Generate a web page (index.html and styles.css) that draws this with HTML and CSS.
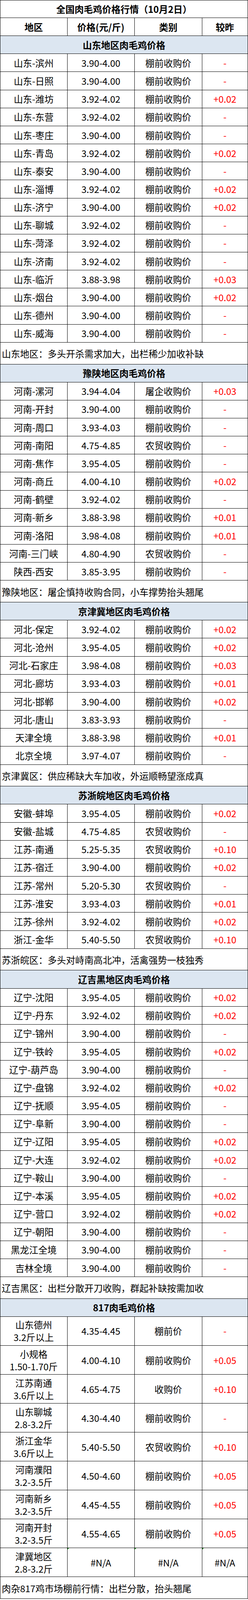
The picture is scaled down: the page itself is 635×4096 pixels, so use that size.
FILE: index.html
```html
<!DOCTYPE html>
<html lang="zh-CN">
<head>
<meta charset="utf-8">
<title>全国肉毛鸡价格行情</title>
<link rel="stylesheet" href="styles.css">
</head>
<body>
<div class="sheet">
  <div class="title">全国肉毛鸡价格行情（10月2日）</div>
  <div class="row hd"><div class="c">地区</div><div class="c">价格(元/斤)</div><div class="c">类别</div><div class="c">较昨</div></div>

  <div class="sec">山东地区肉毛鸡价格</div>
  <div class="row"><div class="c">山东-滨州</div><div class="c">3.90-4.00</div><div class="c">棚前收购价</div><div class="c up">-</div></div>
  <div class="row"><div class="c">山东-日照</div><div class="c">3.90-4.00</div><div class="c">棚前收购价</div><div class="c up">-</div></div>
  <div class="row"><div class="c">山东-潍坊</div><div class="c">3.92-4.02</div><div class="c">棚前收购价</div><div class="c up">+0.02</div></div>
  <div class="row"><div class="c">山东-东营</div><div class="c">3.92-4.02</div><div class="c">棚前收购价</div><div class="c up">-</div></div>
  <div class="row"><div class="c">山东-枣庄</div><div class="c">3.90-4.00</div><div class="c">棚前收购价</div><div class="c up">-</div></div>
  <div class="row"><div class="c">山东-青岛</div><div class="c">3.92-4.02</div><div class="c">棚前收购价</div><div class="c up">+0.02</div></div>
  <div class="row"><div class="c">山东-泰安</div><div class="c">3.90-4.00</div><div class="c">棚前收购价</div><div class="c up">-</div></div>
  <div class="row"><div class="c">山东-淄博</div><div class="c">3.92-4.02</div><div class="c">棚前收购价</div><div class="c up">+0.02</div></div>
  <div class="row"><div class="c">山东-济宁</div><div class="c">3.90-4.00</div><div class="c">棚前收购价</div><div class="c up">+0.02</div></div>
  <div class="row"><div class="c">山东-聊城</div><div class="c">3.92-4.02</div><div class="c">棚前收购价</div><div class="c up">-</div></div>
  <div class="row"><div class="c">山东-菏泽</div><div class="c">3.92-4.02</div><div class="c">棚前收购价</div><div class="c up">-</div></div>
  <div class="row"><div class="c">山东-济南</div><div class="c">3.92-4.02</div><div class="c">棚前收购价</div><div class="c up">-</div></div>
  <div class="row"><div class="c">山东-临沂</div><div class="c">3.88-3.98</div><div class="c">棚前收购价</div><div class="c up">+0.03</div></div>
  <div class="row"><div class="c">山东-烟台</div><div class="c">3.90-4.00</div><div class="c">棚前收购价</div><div class="c up">+0.02</div></div>
  <div class="row"><div class="c">山东-德州</div><div class="c">3.90-4.00</div><div class="c">棚前收购价</div><div class="c up">-</div></div>
  <div class="row"><div class="c">山东-威海</div><div class="c">3.90-4.00</div><div class="c">棚前收购价</div><div class="c up">-</div></div>
  <div class="note">山东地区：多头开杀需求加大，出栏稀少加收补缺</div>

  <div class="sec">豫陕地区肉毛鸡价格</div>
  <div class="row"><div class="c">河南-漯河</div><div class="c">3.94-4.04</div><div class="c">屠企收购价</div><div class="c up">+0.03</div></div>
  <div class="row"><div class="c">河南-开封</div><div class="c">3.90-4.00</div><div class="c">棚前收购价</div><div class="c up">-</div></div>
  <div class="row"><div class="c">河南-周口</div><div class="c">3.93-4.03</div><div class="c">棚前收购价</div><div class="c up">-</div></div>
  <div class="row"><div class="c">河南-南阳</div><div class="c">4.75-4.85</div><div class="c">农贸收购价</div><div class="c up">-</div></div>
  <div class="row"><div class="c">河南-焦作</div><div class="c">3.95-4.05</div><div class="c">棚前收购价</div><div class="c up">-</div></div>
  <div class="row"><div class="c">河南-商丘</div><div class="c">4.00-4.10</div><div class="c">棚前收购价</div><div class="c up">+0.02</div></div>
  <div class="row"><div class="c">河南-鹤壁</div><div class="c">3.92-4.02</div><div class="c">棚前收购价</div><div class="c up">-</div></div>
  <div class="row"><div class="c">河南-新乡</div><div class="c">3.88-3.98</div><div class="c">棚前收购价</div><div class="c up">+0.01</div></div>
  <div class="row"><div class="c">河南-洛阳</div><div class="c">3.98-4.08</div><div class="c">棚前收购价</div><div class="c up">+0.01</div></div>
  <div class="row"><div class="c">河南-三门峡</div><div class="c">4.80-4.90</div><div class="c">农贸收购价</div><div class="c up">-</div></div>
  <div class="row"><div class="c">陕西-西安</div><div class="c">3.85-3.95</div><div class="c">棚前收购价</div><div class="c up">-</div></div>
  <div class="note">豫陕地区：屠企慎持收购合同，小车撑势抬头翘尾</div>

  <div class="sec">京津冀地区肉毛鸡价格</div>
  <div class="row"><div class="c">河北-保定</div><div class="c">3.92-4.02</div><div class="c">棚前收购价</div><div class="c up">+0.02</div></div>
  <div class="row"><div class="c">河北-沧州</div><div class="c">3.95-4.05</div><div class="c">棚前收购价</div><div class="c up">+0.02</div></div>
  <div class="row"><div class="c">河北-石家庄</div><div class="c">3.98-4.08</div><div class="c">棚前收购价</div><div class="c up">+0.03</div></div>
  <div class="row"><div class="c">河北-廊坊</div><div class="c">3.93-4.03</div><div class="c">棚前收购价</div><div class="c up">+0.01</div></div>
  <div class="row"><div class="c">河北-邯郸</div><div class="c">3.90-4.00</div><div class="c">棚前收购价</div><div class="c up">+0.02</div></div>
  <div class="row"><div class="c">河北-唐山</div><div class="c">3.83-3.93</div><div class="c">棚前收购价</div><div class="c up">-</div></div>
  <div class="row"><div class="c">天津全境</div><div class="c">3.88-3.98</div><div class="c">棚前收购价</div><div class="c up">+0.01</div></div>
  <div class="row"><div class="c">北京全境</div><div class="c">3.97-4.07</div><div class="c">棚前收购价</div><div class="c up">-</div></div>
  <div class="note">京津冀区：供应稀缺大车加收，外运顺畅望涨成真</div>

  <div class="sec">苏浙皖地区肉毛鸡价格</div>
  <div class="row"><div class="c">安徽-蚌埠</div><div class="c">3.95-4.05</div><div class="c">棚前收购价</div><div class="c up">+0.02</div></div>
  <div class="row"><div class="c">安徽-盐城</div><div class="c">4.75-4.85</div><div class="c">农贸收购价</div><div class="c up">-</div></div>
  <div class="row"><div class="c">江苏-南通</div><div class="c">5.25-5.35</div><div class="c">农贸收购价</div><div class="c up">+0.10</div></div>
  <div class="row"><div class="c">江苏-宿迁</div><div class="c">3.90-4.00</div><div class="c">棚前收购价</div><div class="c up">+0.02</div></div>
  <div class="row"><div class="c">江苏-常州</div><div class="c">5.20-5.30</div><div class="c">农贸收购价</div><div class="c up">-</div></div>
  <div class="row"><div class="c">江苏-淮安</div><div class="c">3.93-4.03</div><div class="c">棚前收购价</div><div class="c up">+0.01</div></div>
  <div class="row"><div class="c">江苏-徐州</div><div class="c">3.92-4.02</div><div class="c">棚前收购价</div><div class="c up">+0.02</div></div>
  <div class="row"><div class="c">浙江-金华</div><div class="c">5.40-5.50</div><div class="c">农贸收购价</div><div class="c up">+0.10</div></div>
  <div class="note">苏浙皖区：多头对峙南高北冲，活禽强势一枝独秀</div>

  <div class="sec">辽吉黑地区肉毛鸡价格</div>
  <div class="row"><div class="c">辽宁-沈阳</div><div class="c">3.95-4.05</div><div class="c">棚前收购价</div><div class="c up">+0.02</div></div>
  <div class="row"><div class="c">辽宁-丹东</div><div class="c">3.92-4.02</div><div class="c">棚前收购价</div><div class="c up">+0.02</div></div>
  <div class="row"><div class="c">辽宁-锦州</div><div class="c">3.90-4.00</div><div class="c">棚前收购价</div><div class="c up">-</div></div>
  <div class="row"><div class="c">辽宁-铁岭</div><div class="c">3.95-4.05</div><div class="c">棚前收购价</div><div class="c up">+0.02</div></div>
  <div class="row"><div class="c">辽宁-葫芦岛</div><div class="c">3.90-4.00</div><div class="c">棚前收购价</div><div class="c up">-</div></div>
  <div class="row"><div class="c">辽宁-盘锦</div><div class="c">3.92-4.02</div><div class="c">棚前收购价</div><div class="c up">+0.02</div></div>
  <div class="row"><div class="c">辽宁-抚顺</div><div class="c">3.95-4.05</div><div class="c">棚前收购价</div><div class="c up">-</div></div>
  <div class="row"><div class="c">辽宁-阜新</div><div class="c">3.90-4.00</div><div class="c">棚前收购价</div><div class="c up">-</div></div>
  <div class="row"><div class="c">辽宁-辽阳</div><div class="c">3.95-4.05</div><div class="c">棚前收购价</div><div class="c up">+0.02</div></div>
  <div class="row"><div class="c">辽宁-大连</div><div class="c">3.92-4.02</div><div class="c">棚前收购价</div><div class="c up">+0.02</div></div>
  <div class="row"><div class="c">辽宁-鞍山</div><div class="c">3.90-4.00</div><div class="c">棚前收购价</div><div class="c up">-</div></div>
  <div class="row"><div class="c">辽宁-本溪</div><div class="c">3.95-4.05</div><div class="c">棚前收购价</div><div class="c up">+0.02</div></div>
  <div class="row"><div class="c">辽宁-营口</div><div class="c">3.92-4.02</div><div class="c">棚前收购价</div><div class="c up">+0.02</div></div>
  <div class="row"><div class="c">辽宁-朝阳</div><div class="c">3.90-4.00</div><div class="c">棚前收购价</div><div class="c up">-</div></div>
  <div class="row"><div class="c">黑龙江全境</div><div class="c">3.90-4.00</div><div class="c">棚前收购价</div><div class="c up">-</div></div>
  <div class="row"><div class="c">吉林全境</div><div class="c">3.90-4.00</div><div class="c">棚前收购价</div><div class="c up">-</div></div>
  <div class="note">辽吉黑区：出栏分散开刀收购，群起补缺按需加收</div>

  <div class="sec">817肉毛鸡价格</div>
  <div class="row tall"><div class="c">山东德州<br>3.2斤以上</div><div class="c">4.35-4.45</div><div class="c">棚前价</div><div class="c up">-</div></div>
  <div class="row tall"><div class="c">小规格<br>1.50-1.70斤</div><div class="c">4.00-4.10</div><div class="c">棚前收购价</div><div class="c up">+0.05</div></div>
  <div class="row tall"><div class="c">江苏南通<br>3.6斤以上</div><div class="c">4.65-4.75</div><div class="c">收购价</div><div class="c up">+0.10</div></div>
  <div class="row tall"><div class="c">山东聊城<br>2.8-3.2斤</div><div class="c">4.30-4.40</div><div class="c">棚前收购价</div><div class="c up">-</div></div>
  <div class="row tall"><div class="c">浙江金华<br>3.6斤以上</div><div class="c">5.40-5.50</div><div class="c">农贸收购价</div><div class="c up">+0.10</div></div>
  <div class="row tall"><div class="c">河南濮阳<br>3.2-3.5斤</div><div class="c">4.50-4.60</div><div class="c">棚前收购价</div><div class="c up">+0.05</div></div>
  <div class="row tall"><div class="c">河南新乡<br>3.2-3.5斤</div><div class="c">4.45-4.55</div><div class="c">棚前收购价</div><div class="c up">+0.05</div></div>
  <div class="row tall"><div class="c">河南开封<br>3.2-3.5斤</div><div class="c">4.55-4.65</div><div class="c">棚前收购价</div><div class="c up">+0.05</div></div>
  <div class="row tall"><div class="c">津冀地区<br>2.8-3.2斤</div><div class="c err">#N/A</div><div class="c err">#N/A</div><div class="c err">#N/A</div></div>
  <div class="note">肉杂817鸡市场棚前行情：出栏分散，抬头翘尾</div>
</div>
</body>
</html>
```

FILE: styles.css
```css
html, body {
  margin: 0;
  padding: 0;
  background: #ffffff;
}

.sheet {
  width: 635px;
  box-sizing: border-box;
  border: 1.5px solid #000;
  border-bottom: none;
  font-family: "Noto Sans CJK SC", "Noto Sans", sans-serif;
  font-size: 23.5px;
  color: #000;
  line-height: 32px;
}

.title {
  height: 44.8px;
  box-sizing: border-box;
  border-bottom: 1.5px solid #000;
  display: flex;
  align-items: center;
  justify-content: center;
  font-weight: 700;
}

.row {
  display: grid;
  grid-template-columns: 171.5px 172.5px 172.5px 1fr;
  height: 46.16px;
  box-sizing: border-box;
  border-bottom: 1.5px solid #000;
}

.row.hd {
  height: 46.5px;
  font-weight: 700;
}

.row.tall {
  height: 74.04px;
}

.c {
  position: relative;
  display: flex;
  align-items: center;
  justify-content: center;
  text-align: center;
  border-right: 1.5px solid #000;
  white-space: nowrap;
}

.c:last-child {
  border-right: none;
}

.up {
  color: #ff0000;
}

.err::before {
  content: "";
  position: absolute;
  left: 0;
  top: 0;
  border-top: 4px solid #1a8a1a;
  border-right: 4px solid transparent;
}

.sec {
  height: 46.16px;
  box-sizing: border-box;
  border-bottom: 1.5px solid #000;
  background: #dce6f1;
  display: flex;
  align-items: center;
  justify-content: center;
  font-weight: 700;
}

.row.hd + .sec {
  height: 46px;
}

.note {
  height: 55.74px;
  box-sizing: border-box;
  border-bottom: 1.5px solid #000;
  display: flex;
  align-items: center;
  padding: 2px 0 0 3.5px;
  white-space: nowrap;
}
```
